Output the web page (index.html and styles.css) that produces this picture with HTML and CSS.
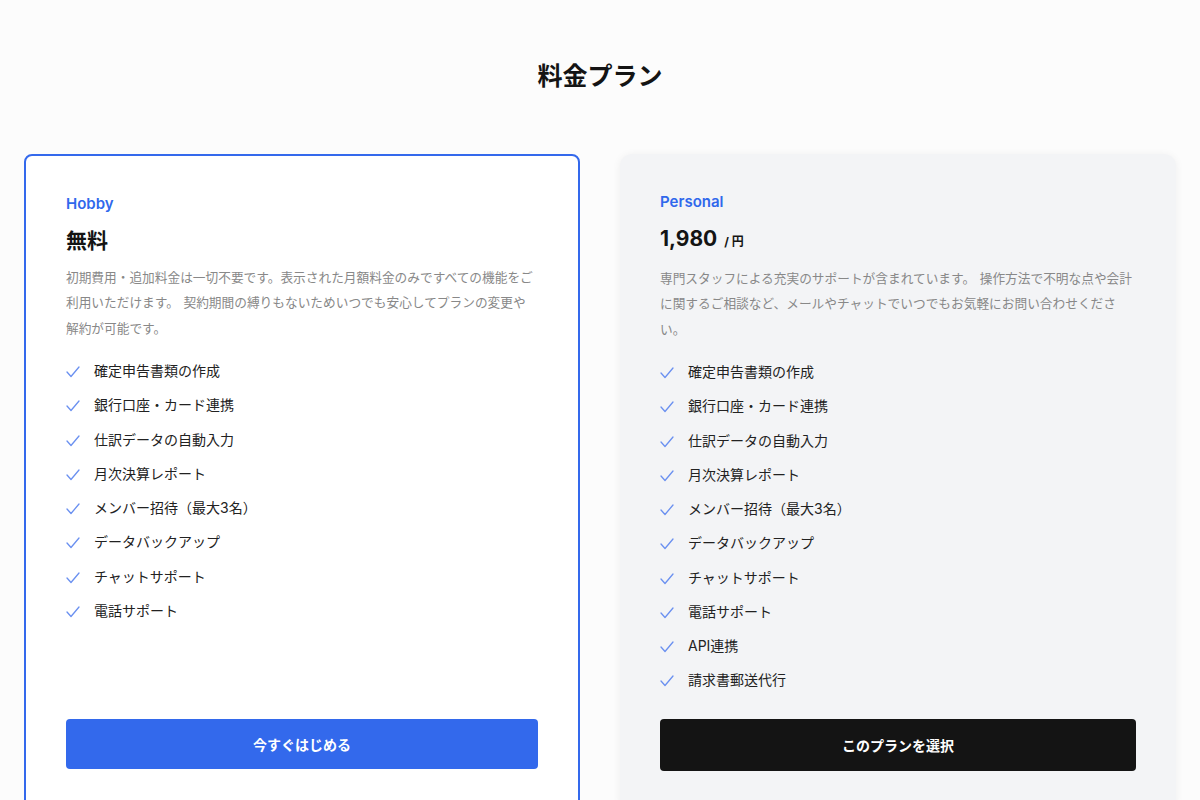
FILE: index.html
```html
<!DOCTYPE html>
<html lang="ja">
<head>
    <meta charset="UTF-8">
    <meta name="viewport" content="width=device-width, initial-scale=1.0">
    <title>料金プラン</title>
    <link rel="stylesheet" href="styles.css">
</head>
<body>
    <main class="pricing">
        <h1 class="pricing-title">料金プラン</h1>
        <div class="plans">
            <div class="plan plan-active">
                <p class="plan-name">Hobby</p>
                <p class="plan-price">無料</p>
                <p class="plan-desc">初期費用・追加料金は一切不要です。表示された月額料金のみですべての機能をご利用いただけます。 契約期間の縛りもないためいつでも安心してプランの変更や解約が可能です。</p>
                <ul class="features">
                    <li><svg class="check" viewBox="0 0 14 14"><path d="M1 8l4 4.5 8-9.5"/></svg>確定申告書類の作成</li>
                    <li><svg class="check" viewBox="0 0 14 14"><path d="M1 8l4 4.5 8-9.5"/></svg>銀行口座・カード連携</li>
                    <li><svg class="check" viewBox="0 0 14 14"><path d="M1 8l4 4.5 8-9.5"/></svg>仕訳データの自動入力</li>
                    <li><svg class="check" viewBox="0 0 14 14"><path d="M1 8l4 4.5 8-9.5"/></svg>月次決算レポート</li>
                    <li><svg class="check" viewBox="0 0 14 14"><path d="M1 8l4 4.5 8-9.5"/></svg>メンバー招待（最大3名）</li>
                    <li><svg class="check" viewBox="0 0 14 14"><path d="M1 8l4 4.5 8-9.5"/></svg>データバックアップ</li>
                    <li><svg class="check" viewBox="0 0 14 14"><path d="M1 8l4 4.5 8-9.5"/></svg>チャットサポート</li>
                    <li><svg class="check" viewBox="0 0 14 14"><path d="M1 8l4 4.5 8-9.5"/></svg>電話サポート</li>
                </ul>
                <button class="plan-btn btn-primary">今すぐはじめる</button>
            </div>
            <div class="plan plan-muted">
                <p class="plan-name">Personal</p>
                <p class="plan-price">1,980 <span class="per">/ 円</span></p>
                <p class="plan-desc">専門スタッフによる充実のサポートが含まれています。 操作方法で不明な点や会計に関するご相談など、メールやチャットでいつでもお気軽にお問い合わせください。</p>
                <ul class="features">
                    <li><svg class="check" viewBox="0 0 14 14"><path d="M1 8l4 4.5 8-9.5"/></svg>確定申告書類の作成</li>
                    <li><svg class="check" viewBox="0 0 14 14"><path d="M1 8l4 4.5 8-9.5"/></svg>銀行口座・カード連携</li>
                    <li><svg class="check" viewBox="0 0 14 14"><path d="M1 8l4 4.5 8-9.5"/></svg>仕訳データの自動入力</li>
                    <li><svg class="check" viewBox="0 0 14 14"><path d="M1 8l4 4.5 8-9.5"/></svg>月次決算レポート</li>
                    <li><svg class="check" viewBox="0 0 14 14"><path d="M1 8l4 4.5 8-9.5"/></svg>メンバー招待（最大3名）</li>
                    <li><svg class="check" viewBox="0 0 14 14"><path d="M1 8l4 4.5 8-9.5"/></svg>データバックアップ</li>
                    <li><svg class="check" viewBox="0 0 14 14"><path d="M1 8l4 4.5 8-9.5"/></svg>チャットサポート</li>
                    <li><svg class="check" viewBox="0 0 14 14"><path d="M1 8l4 4.5 8-9.5"/></svg>電話サポート</li>
                    <li><svg class="check" viewBox="0 0 14 14"><path d="M1 8l4 4.5 8-9.5"/></svg>API連携</li>
                    <li><svg class="check" viewBox="0 0 14 14"><path d="M1 8l4 4.5 8-9.5"/></svg>請求書郵送代行</li>
                </ul>
                <button class="plan-btn btn-dark">このプランを選択</button>
            </div>
        </div>
    </main>
</body>
</html>
```
FILE: styles.css
```css
body {
    margin: 0;
    background-color: #fcfcfc;
    color: #141414;
    font-family: Inter, "Noto Sans CJK JP", sans-serif;
}
.pricing { padding: 58px 24px 0; }
.pricing-title { margin: 0 0 60px; font-size: 25px; line-height: 36px; font-weight: 700; text-align: center; }
.plans { display: grid; grid-template-columns: 1fr 1fr; gap: 40px; }
.plan { display: flex; flex-direction: column; padding: 36px 40px 40px; border-radius: 12px; }
.plan-active { background-color: #fff; border: 2px solid #3469ec; border-radius: 8px; }
.plan-muted { background-color: #f3f4f6; box-shadow: 0 1px 8px rgba(0, 0, 0, 0.06); }
.plan-name { margin: 0; color: #3068ec; font-size: 15px; line-height: 24px; font-weight: 600; }
.plan-price { margin: 9px 0 0; font-size: 21px; line-height: 32px; font-weight: 700; }
.plan-price .per { font-size: 12px; font-weight: 700; margin-left: 2px; }
.plan-desc { margin: 8px 0 0; color: #888; font-size: 12.7px; line-height: 2; word-spacing: 1px; }
.features { list-style: none; margin: 18px 0 27px; padding: 0; display: flex; flex-direction: column; gap: 10.25px; }
.features li { display: flex; align-items: center; font-size: 14px; line-height: 24px; color: #222; }
.check { width: 14px; height: 14px; margin-right: 14px; fill: none; stroke: #6a90f0; stroke-width: 1.3; stroke-linecap: round; stroke-linejoin: round; }
.plan-btn {
    margin-top: auto;
    height: 52px;
    border: none;
    border-radius: 4px;
    color: #fff;
    font-family: inherit;
    font-size: 14px;
    font-weight: 700;
    cursor: pointer;
}
.btn-primary { background-color: #3369ec; height: 50px; }
.btn-dark { background-color: #141414; }
```
